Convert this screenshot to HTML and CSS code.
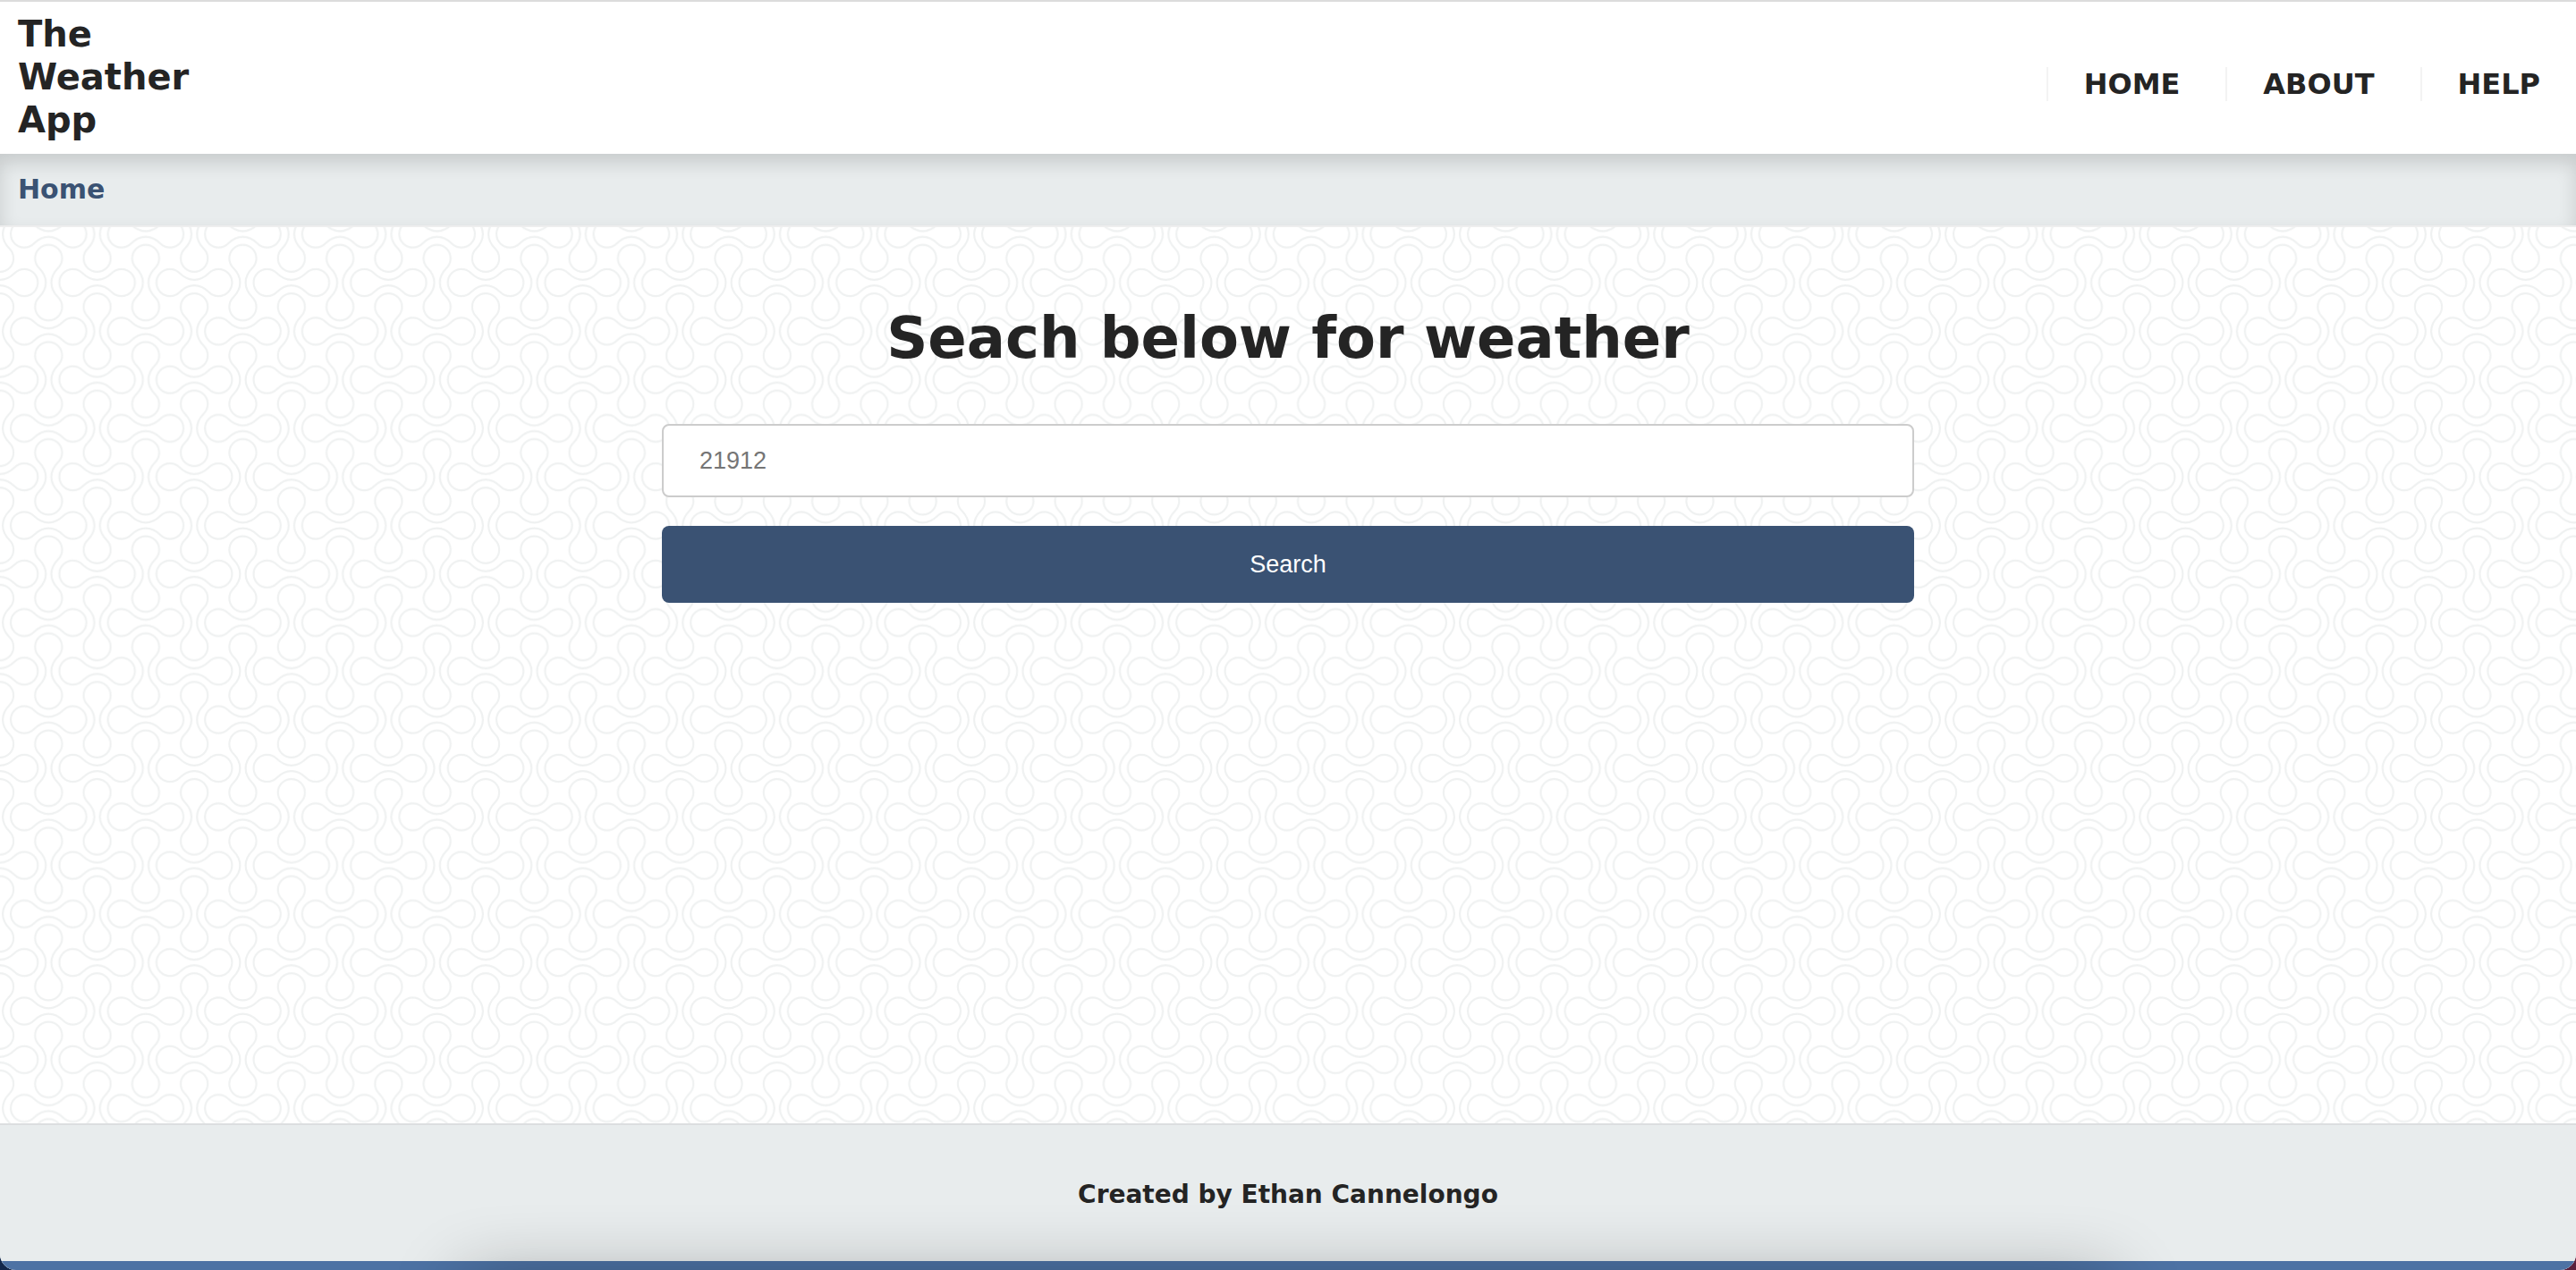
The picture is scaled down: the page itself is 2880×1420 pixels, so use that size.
FILE: index.html
```html
<!DOCTYPE html>
<html lang="en">
<head>
  <meta charset="utf-8">
  <title>The Weather App</title>
  <link rel="stylesheet" href="styles.css">
</head>
<body>
  <div class="page">
    <header class="site-header">
      <div class="brand">The<br>Weather<br>App</div>
      <nav class="site-nav">
        <a class="nav-link" href="#home">HOME</a>
        <a class="nav-link" href="#about">ABOUT</a>
        <a class="nav-link" href="#help">HELP</a>
      </nav>
    </header>
    <nav class="breadcrumb">
      <a class="breadcrumb-link" href="#home">Home</a>
    </nav>
    <main class="content">
      <h1 class="title">Seach below for weather</h1>
      <form class="search-form">
        <input class="search-input" type="text" placeholder="21912" aria-label="Zip code">
        <button class="search-button" type="submit">Search</button>
      </form>
    </main>
    <footer class="site-footer">
      <p class="credit">Created by Ethan Cannelongo</p>
      <div class="dock-shadow"></div>
    </footer>
  </div>
</body>
</html>
```

FILE: styles.css
```css
* {
  box-sizing: border-box;
}

body {
  margin: 0;
  background: linear-gradient(to right, #12274a 50%, #5a1f3c 50%);
  color: #242424;
  font-family: Verdana, "DejaVu Sans", sans-serif;
  font-weight: 700;
}

a {
  color: inherit;
  text-decoration: none;
}

.page {
  display: flex;
  flex-direction: column;
  min-height: 100vh;
  overflow: hidden;
  border-top: 2px solid #dcdcdc;
  border-radius: 0 0 18px 18px;
  background: #fff;
}

.site-header {
  display: flex;
  align-items: center;
  justify-content: space-between;
  padding: 12px 40px 14px 20px;
}

.brand {
  font-size: 40px;
  line-height: 48px;
}

.site-nav {
  display: flex;
  gap: 51px;
  padding-top: 16px;
}

.nav-link {
  padding-left: 40px;
  border-left: 2px solid #f3f3f3;
  font-size: 32px;
  line-height: 38px;
}

.breadcrumb {
  padding: 20px;
  border-bottom: 2px solid #eee;
  background: #e8eced;
  box-shadow: inset 0 10px 20px rgba(0, 0, 0, 0.14);
  color: #3a5273;
  font-size: 30px;
  line-height: 40px;
}

.content {
  flex: 1;
  padding: 84px 20px;
  background-color: #fff;
  background-image: url("data:image/svg+xml,%3Csvg xmlns='http://www.w3.org/2000/svg' xmlns:xlink='http://www.w3.org/1999/xlink' width='543' height='543' viewBox='0 0 2000 2000'%3E%3Cdefs%3E%3Cpath id='h' d='M0-11.4C-21-11.4-41-20-60.7-39.3A55.6 55.6 0 1 0-60.7 39.3C-41 20-21 11.4 0 11.4C21 11.4 41 20 60.7 39.3A55.6 55.6 0 1 0 60.7-39.3C41-20 21-11.4 0-11.4Z'/%3E%3Cpattern id='p' width='400' height='400' patternUnits='userSpaceOnUse'%3E%3Cg fill='none' stroke='%23eff1f1' stroke-width='8'%3E%3Cuse xlink:href='%23h'/%3E%3Cuse xlink:href='%23h' x='400'/%3E%3Cuse xlink:href='%23h' y='400'/%3E%3Cuse xlink:href='%23h' x='400' y='400'/%3E%3Cuse xlink:href='%23h' x='200' y='200'/%3E%3Cuse xlink:href='%23h' transform='translate(200 0) rotate(90)'/%3E%3Cuse xlink:href='%23h' transform='translate(200 400) rotate(90)'/%3E%3Cuse xlink:href='%23h' transform='translate(0 200) rotate(90)'/%3E%3Cuse xlink:href='%23h' transform='translate(400 200) rotate(90)'/%3E%3C/g%3E%3C/pattern%3E%3C/defs%3E%3Crect width='2000' height='2000' fill='url(%23p)'/%3E%3C/svg%3E");
  background-position: 0 62px;
  background-size: 543px 543px;
}

.title {
  margin: 0 0 56px;
  font-size: 64px;
  line-height: 80px;
  text-align: center;
}

.search-form {
  display: flex;
  flex-direction: column;
  gap: 32px;
  max-width: 1400px;
  margin: 0 auto;
}

.search-input,
.search-button {
  width: 100%;
  border-radius: 8px;
  font-family: Arial, "Liberation Sans", sans-serif;
  font-size: 27px;
  font-weight: 400;
}

.search-input {
  height: 82px;
  padding: 0 40px;
  border: 2px solid #ccc;
  background: #fff;
  color: #242424;
}

.search-input::placeholder {
  color: #757575;
}

.search-button {
  height: 86px;
  border: 0;
  background: #3a5273;
  color: #fff;
}

.site-footer {
  position: relative;
  padding: 60px 20px 56px;
  border-top: 2px solid #dcdee0;
  border-bottom: 10px solid #4d72a4;
  background: #e8eced;
}

.credit {
  margin: 0;
  font-size: 28px;
  line-height: 36px;
  text-align: center;
}

/* Soft shade rising from the bottom edge */
.dock-shadow {
  position: absolute;
  top: 100%;
  right: 18%;
  left: 18%;
  height: 80px;
  margin-top: 20px;
  box-shadow: 0 0 80px rgba(0, 0, 0, 0.32);
}
```
